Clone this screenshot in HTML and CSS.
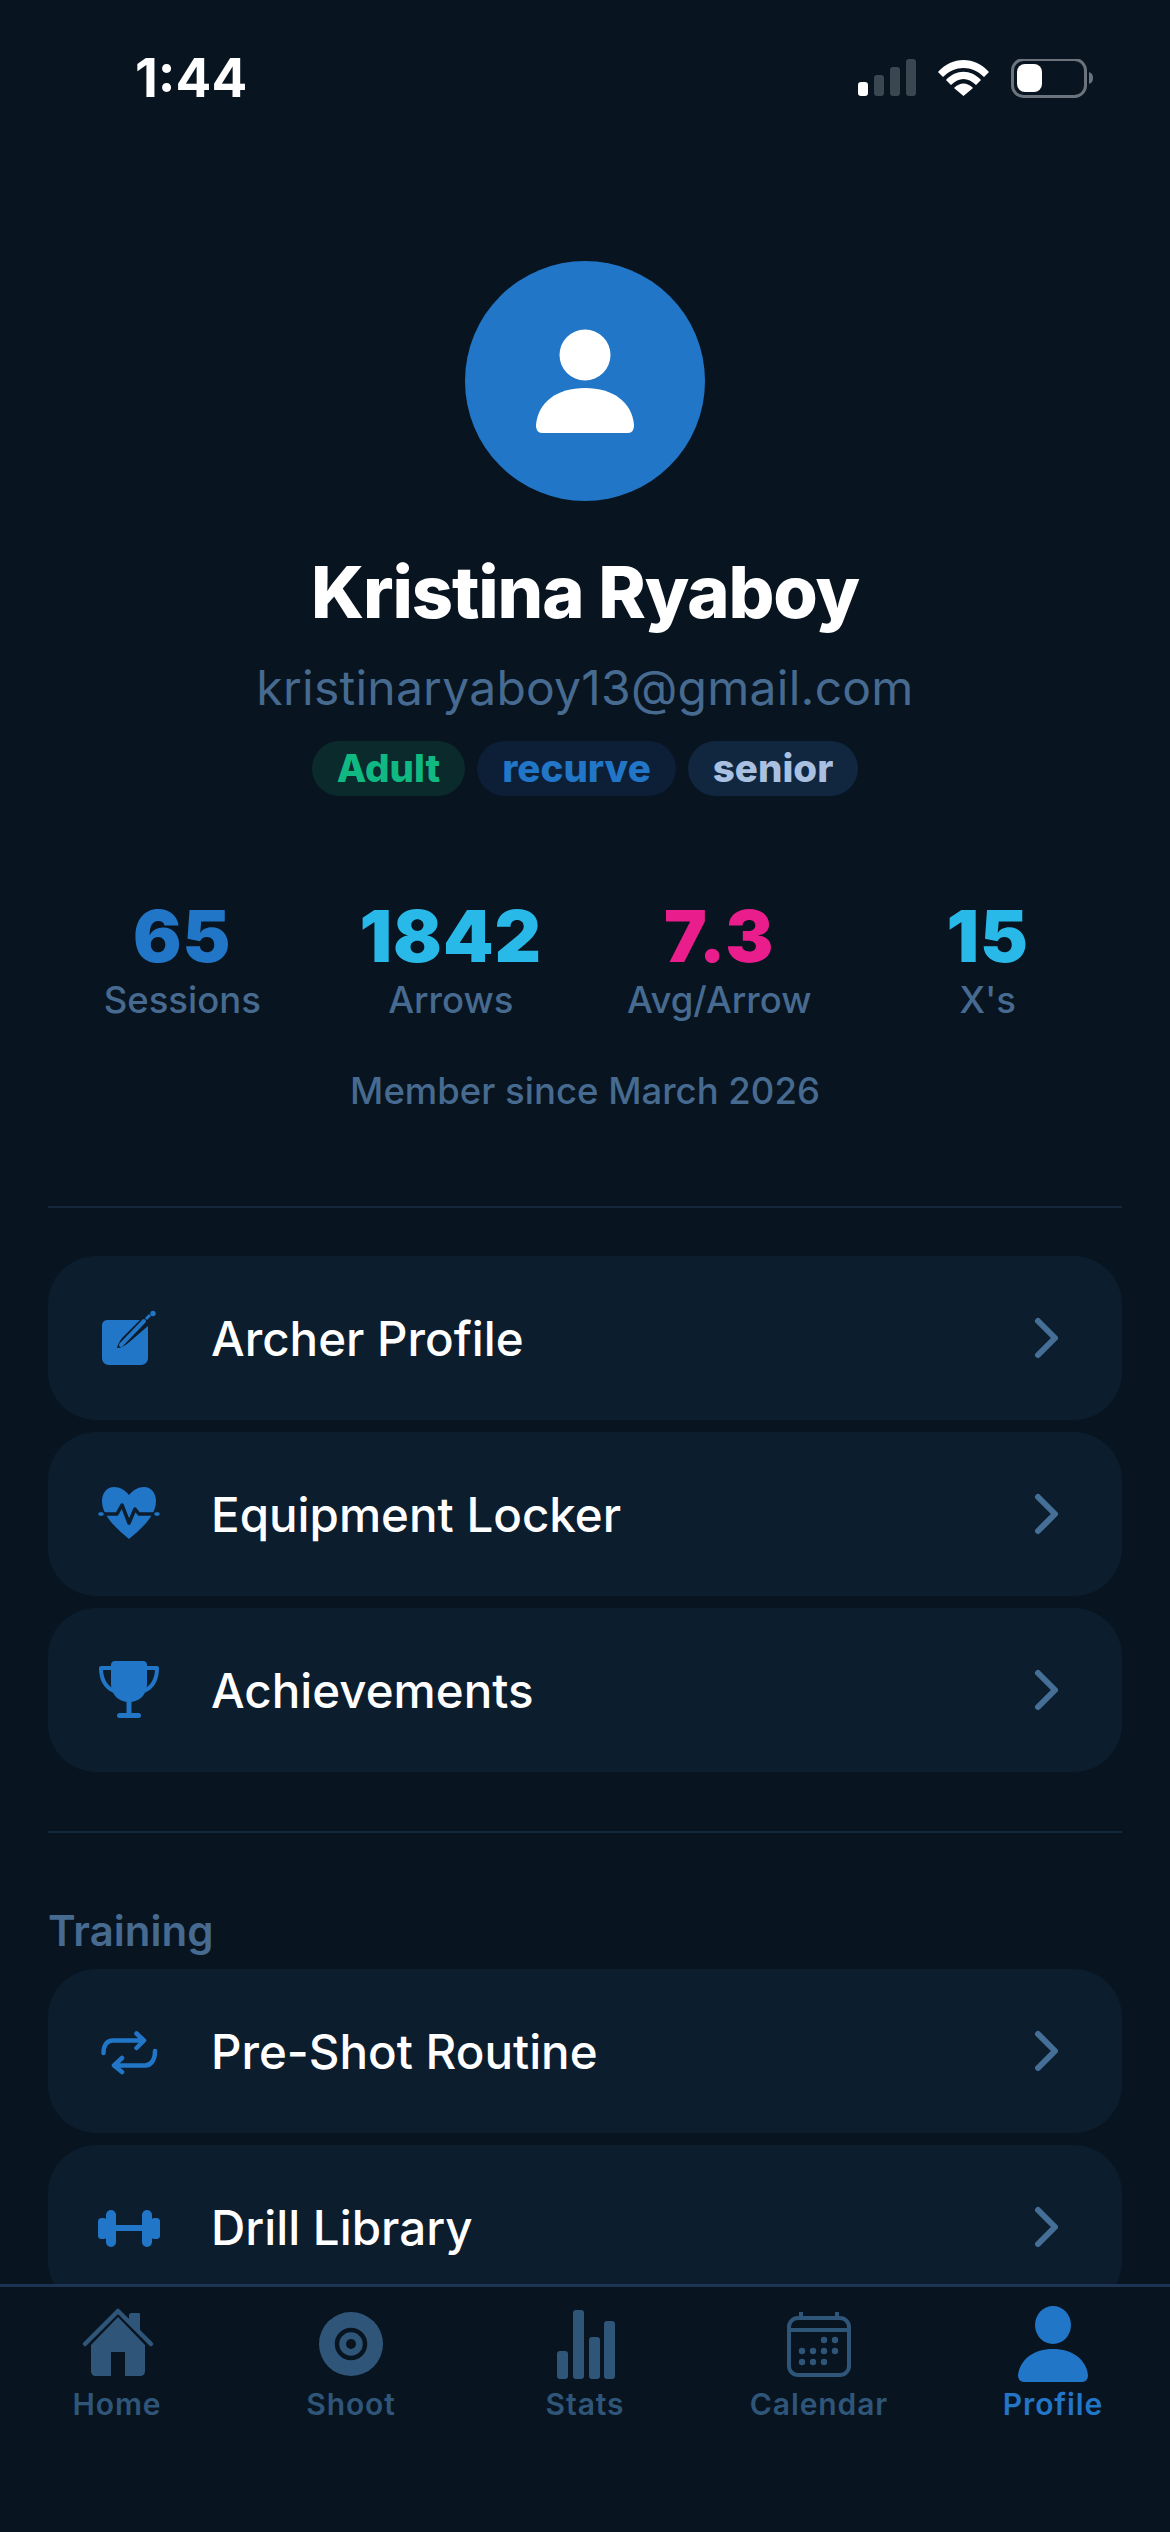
FILE: index.html
```html
<!DOCTYPE html>
<html lang="en">
<head>
<meta charset="UTF-8">
<meta name="viewport" content="width=device-width, initial-scale=1.0">
<title>Profile</title>
<link rel="stylesheet" href="styles.css">
</head>
<body>

<div class="app">
  <div class="status-bar">
    <span class="time">1:44</span>
    <svg class="status-icons" width="240" height="40" viewBox="0 0 240 40">
      <rect x="0" y="23" width="10" height="14" rx="3" fill="#fff"/>
      <rect x="16" y="16" width="10" height="21" rx="3" fill="#3a4650"/>
      <rect x="32" y="8" width="10" height="29" rx="3" fill="#3a4650"/>
      <rect x="48" y="0" width="10" height="37" rx="3" fill="#3a4650"/>
      <path d="M80 13 C94 -3 117 -3 131 13 L126 18 C114 6 97 6 85 18 Z" fill="#fff"/>
      <path d="M88 21 C98 10 113 10 123 21 L118 26 C110 18 101 18 93 26 Z" fill="#fff"/>
      <path d="M96 29 C102 23 109 23 115 29 L105.500 37 Z" fill="#fff"/>
      <rect x="154.500" y="0.500" width="73" height="37" rx="11" fill="none" stroke="#6b747c" stroke-width="3"/>
      <rect x="159" y="5" width="25" height="28" rx="8" fill="#fff"/>
      <path d="M231 13 C234 14 235 16 235 19 C235 22 234 24 231 25 Z" fill="#6b747c"/>
    </svg>
  </div>

  <div class="scroll">
    <div class="hero">
      <div class="avatar">
        <svg width="240" height="240" viewBox="0 0 240 240">
          <circle cx="120" cy="94" r="25.500" fill="#fff"/>
          <path d="M71 164 C73 141 92 127 120 127 C148 127 167 141 169 164 C169 169 167 172 163 172 L77 172 C73 172 71 169 71 164 Z" fill="#fff"/>
        </svg>
      </div>
      <h1 class="name">Kristina Ryaboy</h1>
      <div class="email">kristinaryaboy13@gmail.com</div>
      <div class="badges">
        <span class="badge badge-adult">Adult</span>
        <span class="badge badge-bow">recurve</span>
        <span class="badge badge-class">senior</span>
      </div>
    </div>

    <div class="stats">
      <div class="stat">
        <div class="stat-num blue">65</div>
        <div class="stat-label">Sessions</div>
      </div>
      <div class="stat">
        <div class="stat-num cyan">1842</div>
        <div class="stat-label">Arrows</div>
      </div>
      <div class="stat">
        <div class="stat-num pink">7.3</div>
        <div class="stat-label">Avg/Arrow</div>
      </div>
      <div class="stat">
        <div class="stat-num cyan">15</div>
        <div class="stat-label">X's</div>
      </div>
    </div>
    <div class="member">Member since March 2026</div>

    <div class="divider divider-top"></div>

    <div class="menu">
      <div class="row">
        <svg class="row-icon" width="60" height="60" viewBox="0 0 60 60">
          <path d="M9 12 L41 12 L24 29 C21 32 19 36 18 40 C22 40 25 38 28 36 L49 18 L49 50 C49 54 46 57 42 57 L10 57 C6 57 3 54 3 50 L3 18 C3 14 5 12 9 12 Z" fill="#2176c7"/>
          <path d="M22 37 L45 13" stroke="#2176c7" stroke-width="4" stroke-linecap="round"/>
          <circle cx="54" cy="5.500" r="2.700" fill="#2176c7"/>
          <path d="M47 11 L51 7" stroke="#2176c7" stroke-width="3"/>
        </svg>
        <span class="row-title">Archer Profile</span>
        <svg class="chevron" width="30" height="44" viewBox="0 0 30 44"><path d="M6 5 L23 22 L6 39"/></svg>
      </div>
      <div class="row">
        <svg class="row-icon" width="60" height="60" viewBox="0 0 60 60">
          <path d="M30 11 C34 6 39 3 45 3 C52 3 57 9 57 17 C57 32 42 45 30 55 C18 45 3 32 3 17 C3 9 8 3 15 3 C21 3 26 6 30 11 Z" fill="#2176c7"/>
          <path d="M5 30 L18 30 L23 21 L30 39 L36 25 L40 30 L55 30" fill="none" stroke="#0c1d2e" stroke-width="3.500" stroke-linecap="round" stroke-linejoin="round"/>
          <path d="M1 30 L3 30 M57 30 L59 30" stroke="#2176c7" stroke-width="3.500" stroke-linecap="round"/>
        </svg>
        <span class="row-title">Equipment Locker</span>
        <svg class="chevron" width="30" height="44" viewBox="0 0 30 44"><path d="M6 5 L23 22 L6 39"/></svg>
      </div>
      <div class="row">
        <svg class="row-icon" width="60" height="60" viewBox="0 0 60 60">
          <path d="M16 1 L44 1 C47 1 48 3 48 5 L48 24 C48 35 40 42 30 42 C20 42 12 35 12 24 L12 5 C12 3 13 1 16 1 Z" fill="#2176c7"/>
          <path d="M12 8 L2 8 C2 20 6 27 15 31 M48 8 L58 8 C58 20 54 27 45 31" fill="none" stroke="#2176c7" stroke-width="4" stroke-linejoin="round"/>
          <rect x="27.500" y="40" width="5" height="15" fill="#2176c7"/>
          <rect x="18" y="53" width="24" height="5" rx="2.500" fill="#2176c7"/>
        </svg>
        <span class="row-title">Achievements</span>
        <svg class="chevron" width="30" height="44" viewBox="0 0 30 44"><path d="M6 5 L23 22 L6 39"/></svg>
      </div>
    </div>

    <div class="divider divider-bottom"></div>

    <div class="section-title">Training</div>
    <div class="menu">
      <div class="row">
        <svg class="row-icon" width="60" height="60" viewBox="0 0 60 60">
          <path d="M4.500 32 C4.500 24 8 19.500 14 19.500 L44 19.500 M37.500 12.500 L45 19.500 L37.500 27 M56 30 C56 39 52 44.500 46 44.500 L16 44.500 M23 37 L15 44.500 L23 51" fill="none" stroke="#2176c7" stroke-width="4.500" stroke-linecap="round" stroke-linejoin="round"/>
        </svg>
        <span class="row-title">Pre-Shot Routine</span>
        <svg class="chevron" width="30" height="44" viewBox="0 0 30 44"><path d="M6 5 L23 22 L6 39"/></svg>
      </div>
      <div class="row">
        <svg class="row-icon" width="60" height="60" viewBox="0 0 60 60">
          <rect x="-1" y="21" width="9" height="21" rx="3.500" fill="#2176c7"/>
          <rect x="7" y="13" width="10" height="37" rx="5" fill="#2176c7"/>
          <rect x="16" y="28" width="28" height="6" fill="#2176c7"/>
          <rect x="43" y="13" width="10" height="37" rx="5" fill="#2176c7"/>
          <rect x="52" y="21" width="9" height="21" rx="3.500" fill="#2176c7"/>
        </svg>
        <span class="row-title">Drill Library</span>
        <svg class="chevron" width="30" height="44" viewBox="0 0 30 44"><path d="M6 5 L23 22 L6 39"/></svg>
      </div>
    </div>
  </div>

  <div class="tabbar">
    <div class="tab">
      <svg class="tab-icon" width="84" height="80" viewBox="0 0 84 80">
        <path d="M43 13 L16 41 L16 67 C16 70 18 72 21 72 L36 72 L36 48 L50 48 L50 72 L65 72 C68 72 70 70 70 67 L70 41 Z" fill="#2f5679"/>
        <path d="M10 40 L43 7 L76 40" fill="none" stroke="#2f5679" stroke-width="4.500" stroke-linecap="round" stroke-linejoin="round"/>
        <path d="M54 11 C54 10 55 9 56 9 L64 9 C65 9 65 10 65 11 L65 30 L54 18 Z" fill="#2f5679"/>
      </svg>
      <span class="tab-label">Home</span>
    </div>
    <div class="tab">
      <svg class="tab-icon" width="84" height="80" viewBox="0 0 84 80">
        <circle cx="42" cy="40" r="32" fill="#2f5679"/>
        <circle cx="42" cy="40" r="14" fill="none" stroke="#08141f" stroke-width="4.500"/>
        <circle cx="42" cy="40" r="5" fill="#08141f"/>
      </svg>
      <span class="tab-label">Shoot</span>
    </div>
    <div class="tab">
      <svg class="tab-icon" width="84" height="80" viewBox="0 0 84 80">
        <rect x="14" y="47" width="11" height="28" rx="3" fill="#2f5679"/>
        <rect x="30" y="6" width="11" height="69" rx="3" fill="#2f5679"/>
        <rect x="46" y="33" width="11" height="42" rx="3" fill="#2f5679"/>
        <rect x="61" y="17" width="11" height="58" rx="3" fill="#2f5679"/>
      </svg>
      <span class="tab-label">Stats</span>
    </div>
    <div class="tab">
      <svg class="tab-icon" width="84" height="80" viewBox="0 0 84 80">
        <rect x="12" y="14" width="60" height="57" rx="9" fill="none" stroke="#2f5679" stroke-width="4"/>
        <path d="M12 26 L72 26 M24 8 L24 14 M60 8 L60 14" stroke="#2f5679" stroke-width="4"/>
        <g fill="#2f5679">
          <circle cx="47" cy="36" r="3.200"/><circle cx="58" cy="36" r="3.200"/>
          <circle cx="25" cy="47" r="3.200"/><circle cx="36" cy="47" r="3.200"/><circle cx="47" cy="47" r="3.200"/><circle cx="58" cy="47" r="3.200"/>
          <circle cx="25" cy="58" r="3.200"/><circle cx="36" cy="58" r="3.200"/><circle cx="47" cy="58" r="3.200"/>
        </g>
      </svg>
      <span class="tab-label">Calendar</span>
    </div>
    <div class="tab active">
      <svg class="tab-icon" width="84" height="80" viewBox="0 0 84 80">
        <ellipse cx="42" cy="21" rx="18" ry="19" fill="#2176c7"/>
        <path d="M7 71 C9 55 23 45 42 45 C61 45 75 55 77 71 C77 75 75 78 71 78 L13 78 C9 78 7 75 7 71 Z" fill="#2176c7"/>
      </svg>
      <span class="tab-label">Profile</span>
    </div>
  </div>
</div>

</body>
</html>
```

FILE: styles.css
```css
* {
  box-sizing: border-box;
}

body {
  margin: 0;
  padding: 0;
  font-family: Inter, "Noto Sans", sans-serif;
  background-color: #08141f;
}

.app {
  width: 1170px;
  height: 2532px;
  display: flex;
  flex-direction: column;
  overflow: hidden;
  background-color: #08141f;
}

.status-bar {
  height: 132px;
  flex-shrink: 0;
  display: flex;
  justify-content: space-between;
  padding: 58px 72px 0 135px;
}

.time {
  color: #fff;
  font-size: 53px;
  font-weight: 700;
  line-height: 40px;
}

.status-icons {
  margin-top: 1px;
}

.scroll {
  flex: 1;
  min-height: 0;
  overflow: hidden;
  padding: 0 48px;
}

.hero {
  display: flex;
  flex-direction: column;
  align-items: center;
  padding-top: 129px;
}

.avatar {
  width: 240px;
  height: 240px;
  border-radius: 50%;
  background-color: #2176c7;
}

.avatar svg {
  display: block;
}

.name {
  margin: 49px 0 0;
  color: #fff;
  font-size: 72px;
  font-weight: 800;
  letter-spacing: -1.100px;
  line-height: 84px;
}

.email {
  margin-top: 24px;
  color: #466a90;
  font-size: 48px;
  letter-spacing: 0.250px;
  line-height: 60px;
}

.badges {
  margin-top: 23px;
  display: flex;
  gap: 12px;
}

.badge {
  height: 55px;
  padding: 0 25px;
  border-radius: 28px;
  font-size: 38.500px;
  font-weight: 800;
  line-height: 55px;
}

.badge-adult {
  background-color: #0a2a2c;
  color: #10b981;
}

.badge-bow {
  background-color: #0c1f36;
  color: #2176c7;
}

.badge-class {
  background-color: #11263f;
  color: #a9c0e0;
}

.stats {
  margin-top: 104px;
  display: grid;
  grid-template-columns: repeat(4, 1fr);
}

.stat {
  text-align: center;
}

.stat-num {
  font-size: 72px;
  font-weight: 900;
  letter-spacing: 1px;
  line-height: 72px;
}

.blue {
  color: #2176c7;
}

.cyan {
  color: #29b9e8;
}

.pink {
  color: #e91e8c;
}

.stat-label {
  margin-top: 6px;
  color: #466a90;
  font-size: 36.500px;
  font-weight: 500;
  line-height: 44px;
}

.member {
  margin-top: 45px;
  color: #466a90;
  font-size: 36.500px;
  font-weight: 500;
  line-height: 48px;
  text-align: center;
}

.divider {
  height: 2px;
  background-color: #14273c;
}

.divider-top {
  margin: 91px 0 48px;
}

.divider-bottom {
  margin: 59px 0 0;
}

.menu {
  display: flex;
  flex-direction: column;
  gap: 12px;
}

.row {
  height: 164px;
  flex-shrink: 0;
  display: flex;
  align-items: center;
  padding: 0 60px 0 51px;
  border-radius: 48px;
  background-color: #0c1d2e;
}

.row-icon {
  flex-shrink: 0;
  overflow: visible;
}

.row-title {
  flex: 1;
  margin-left: 52px;
  color: #fff;
  font-size: 47.500px;
  font-weight: 500;
}

.chevron path {
  fill: none;
  stroke: #466f98;
  stroke-width: 6px;
  stroke-linecap: round;
  stroke-linejoin: round;
}

.section-title {
  margin-top: 74px;
  height: 62px;
  color: #466a90;
  font-size: 42px;
  font-weight: 600;
  line-height: 48px;
}

.tabbar {
  height: 248px;
  flex-shrink: 0;
  display: grid;
  grid-template-columns: repeat(5, 1fr);
  border-top: 3px solid #1d3353;
  background-color: #08141f;
}

.tab {
  display: flex;
  flex-direction: column;
  align-items: center;
  padding-top: 17px;
}

.tab-icon {
  display: block;
}

.tab-label {
  margin-top: 2px;
  color: #2f5679;
  font-size: 30px;
  font-weight: 600;
  letter-spacing: 0.900px;
  line-height: 36px;
}

.active .tab-label {
  color: #2176c7;
}
```
